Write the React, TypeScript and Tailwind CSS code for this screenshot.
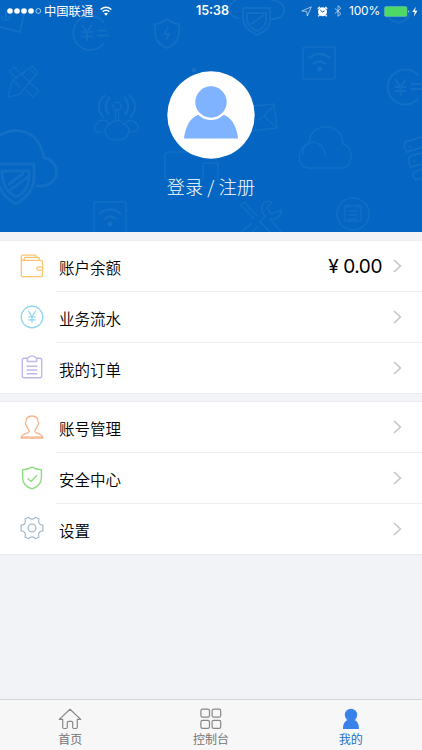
import type { ReactNode } from "react";

interface MenuItem {
    label: string;
    icon: ReactNode;
    value?: string;
}

function WalletIcon() {
    return (
        <svg className="h-6 w-6" viewBox="0 0 24 24" fill="none" stroke="#fdc470" strokeWidth="1.3" strokeLinejoin="round">
            <path d="M22.6 12V8.4a2 2 0 0 0-2-2H3.2A1.9 1.9 0 0 1 1.3 4.5V20.7a2 2 0 0 0 2 2H20.6a2 2 0 0 0 2-2V16.7" />
            <path d="M1.3 4.5V2.9a1.7 1.7 0 0 1 1.7-1.7H14.5a1.7 1.7 0 0 1 1.7 1.7V3.3" />
            <path d="M4.3 6.3V4.9a1.6 1.6 0 0 1 1.6-1.6H17.6a1.6 1.6 0 0 1 1.6 1.6V6.3" />
            <path d="M22.7 12.8H18.2a1.3 1.3 0 0 0-1.3 1.3v.7a1.3 1.3 0 0 0 1.3 1.3H22.7Z" />
        </svg>
    );
}

function YenIcon() {
    return (
        <svg className="h-6 w-6" viewBox="0 0 24 24" fill="none" stroke="#8ad4ec" strokeWidth="1.2">
            <circle cx="12" cy="12" r="10.8" />
            <path d="M8.2 5.8 12 11.7 15.8 5.8M12 11.7V17.8M8.2 12H15.8M8.2 14.8H15.8" />
        </svg>
    );
}

function ClipboardIcon() {
    return (
        <svg className="h-6 w-6" viewBox="0 0 24 24" fill="none" stroke="#bfb6ea" strokeWidth="1.4" strokeLinejoin="round">
            <path d="M7.3 3.2H4.2a1.9 1.9 0 0 0-1.9 1.9V20.8a1.9 1.9 0 0 0 1.9 1.9H19.8a1.9 1.9 0 0 0 1.9-1.9V5.1a1.9 1.9 0 0 0-1.9-1.9H16.7" />
            <path d="M7.3 6.5V3.3L9.2 2.2C10.2.4 13.8.4 14.8 2.2L16.7 3.3V6.5Z" />
            <path d="M6.7 11.3H17.3M6.7 15H17.3M6.7 18.7H17.3" />
        </svg>
    );
}

function UserIcon() {
    return (
        <svg className="h-6 w-6" viewBox="0 0 24 24" fill="none" stroke="#f8b389" strokeWidth="1.3" strokeLinejoin="round">
            <path d="M12 1C7.8 1 5.6 3.7 5.9 7.2C5.1 7.5 5.4 9.6 6.3 10.2C6.8 12.6 7.6 13.7 8.7 14.7C9.6 16.4 8.9 17.4 7 18.2C3.5 19.2 1.4 20 1.1 23H22.9C22.6 20 20.5 19.2 17 18.2C15.1 17.4 14.4 16.4 15.3 14.7C16.4 13.7 17.2 12.6 17.7 10.2C18.6 9.6 18.9 7.5 18.1 7.2C18.4 3.7 16.2 1 12 1Z" />
            <path d="M1.7 21.8H22.3" strokeWidth=".8" />
        </svg>
    );
}

function ShieldIcon() {
    return (
        <svg className="h-6 w-6" viewBox="0 0 24 24" fill="none" stroke="#90dc82" strokeWidth="1.4" strokeLinejoin="round">
            <path d="M12 1.1C9 3 6.2 3.7 2.6 3.8V12C2.6 17.3 6.5 21 12 22.9C17.5 21 21.4 17.3 21.4 12V3.8C17.8 3.7 15 3 12 1.1Z" />
            <path d="M7.5 12.3 11 15.6 17 9.3" />
        </svg>
    );
}

function GearIcon() {
    return (
        <svg className="h-6 w-6" viewBox="0 0 24 24" fill="none" stroke="#a9bccb" strokeWidth="1.3" strokeLinejoin="round">
            <path d="M8.4 1.2C9.5 2.7 10.5 3.2 12 3.2S14.500 2.700 15.600 1.200L18.900 3C18.300 4.900 18.300 6 19 7.300S20.700 8.900 22.900 9.100V14.900C20.700 15.100 19.700 15.500 19 16.700S18.300 19.100 18.900 21L15.600 22.800C14.500 21.300 13.500 20.800 12 20.800S9.500 21.300 8.400 22.800L5.100 21C5.700 19.100 5.700 18 5 16.700S3.300 15.100 1.100 14.900V9.100C3.300 8.900 4.300 8.500 5 7.300S5.700 4.900 5.100 3Z" />
            <circle cx="12" cy="12" r="3.9" />
        </svg>
    );
}

const accountItems: MenuItem[] = [
    { label: "账户余额", icon: <WalletIcon />, value: "¥ 0.00" },
    { label: "业务流水", icon: <YenIcon /> },
    { label: "我的订单", icon: <ClipboardIcon /> },
];

const settingItems: MenuItem[] = [
    { label: "账号管理", icon: <UserIcon /> },
    { label: "安全中心", icon: <ShieldIcon /> },
    { label: "设置", icon: <GearIcon /> },
];

// faint line icons scattered behind the profile header
function HeaderPattern() {
    return (
        <svg
            className="absolute inset-0 h-full w-full"
            viewBox="0 0 422 232"
            fill="none"
            stroke="#fff"
            strokeOpacity=".06"
            strokeWidth="1.5"
            strokeLinejoin="round"
        >
            <path d="M0 27 20 32 25 10M2 16a3.5 3.5 0 1 0 8 0M6 18V12" strokeWidth="2" />
            <path d="M104 23A17 17 0 1 0 104 43M82 25 87 32 92 25M87 32V41M81 32H93M81 36.5H93M97 30.5H107M97 35.5H109" strokeWidth="2" />
            <path d="M418 75A17.5 17.5 0 1 0 418 99M395 79 400.5 87 406 79M400.5 87V96M394.5 87H406.5M394.5 91H406.5M411 84H422M411 89H422" strokeWidth="2" />
            <path d="M386 10C388 26 408 27 411 10M400 5V16" strokeWidth="2" />
            <path d="M167 19C163 22 159 24 155 24C154 36 156 44 167 48C178 44 180 36 179 24C175 24 171 22 167 19Z" strokeWidth="2" />
            <path d="M168.5 27 164 34H169L166 40" strokeWidth="1.8" />
            <path d="M9 91 13 80 32 66 38 72 20 94 9 97ZM13 80 20 87M30 69 36 75M9 71 14 67 39 91 33 97 26 91M9 71 17 79M22 75 25 72M29 82 32 79" strokeWidth="1.3" />
            <path d="M105 95Q93 106 104 118M110 97Q102 106 109 115M124 97Q132 106 125 115M129 95Q141 106 130 118" strokeWidth="2" />
            <circle cx="117" cy="106" r="4" />
            <path d="M115.5 110V121M118.5 110V121M107 136C102 129 108 124 111 124C113 119 121 119 123 124C127 124 132 130 126 137C124 141 109 141 107 136ZM110 124C106 119 98 119 97 124C92 126 94 134 103 132M124 124C128 119 135 120 136 124C141 126 138 133 129 132" />
            <path d="M0 135C18 125 40 132 44 158C60 160 62 184 42 186H36M0 164H34V178C34 190 26 198 16 204C7 199 1 193 0 186M2 171H29C30 186 25 193 16 197C6 192 2 184 2 171ZM8 185 24 173M10 190 28 177" strokeWidth="3" />
            <path d="M239 18C228 18 226 5 236 0M272 0C288 1 288 18 274 19H270M243 8H270V20C270 27 264 32 257 35C249 31 244 27 243 20ZM247 13H266V20C266 26 262 29 257 31C251 28 247 25 247 20ZM251 24 264 15" strokeWidth="2" />
            <rect x="303" y="47" width="32" height="32" rx="2" />
            <path d="M309 58Q319 50 330 58M313 64Q319 59 326 64" strokeWidth="2.4" />
            <circle cx="319.5" cy="69" r="2.5" fill="#fff" fillOpacity=".07" stroke="none" />
            <path d="M94 232V204a2 2 0 0 1 2-2H124a2 2 0 0 1 2 2V232" />
            <path d="M99 214Q110 205 121 214M104 219Q110 214 116 219" strokeWidth="2.4" />
            <circle cx="110" cy="224" r="2.5" fill="#fff" fillOpacity=".07" stroke="none" />
            <path d="M251 106 274 104 277 128 252 131M258 121 274 106M264 116 276 127" />
            <circle cx="194" cy="70" r="2.5" fill="#fff" fillOpacity=".07" stroke="none" />
            <path d="M309 168C296 168 296 146 309 144C309 121 342 121 343 144C354 146 354 168 342 168ZM303 155C301 138 325 138 325 156" />
            <path d="M422 137 405 142Q403 148 407 152L422 147M410 156 422 153M410 156Q407 162 411 167L422 164M414 172 422 169M414 172Q411 176 416 180L422 178M409 147H411M413 161H415" strokeWidth="2" />
            <path d="M181 180H168a3 3 0 0 1-3-3V155a3 3 0 0 1 3-3H213a3 3 0 0 1 3 3V161M203 180V163H218V181" />
            <circle cx="353" cy="214" r="16" />
            <path d="M345 206H361V221H345ZM348 211H358M348 215H358M348 219H358M348 204V208M358 204V208" />
            <path d="M240 205 245 202 249 208 258 216M240 205 245 209 254 219M272 202C262 198 259 209 265 216L260 222 270 232M272 202 267 208 271 214 282 210C280 218 276 220 270 219L281 232M252 223 241 232M259 226 252 232" />
        </svg>
    );
}

function StatusBar() {
    return (
        <div className="relative grid h-[22px] grid-cols-[1fr_auto_1fr] items-center pr-1 pl-[7px] text-white">
            <div className="flex items-center">
                <svg className="h-2 w-[35px]" viewBox="0 0 35 8">
                    <circle cx="3" cy="4" r="2.8" fill="white" />
                    <circle cx="10" cy="4" r="2.8" fill="white" />
                    <circle cx="17" cy="4" r="2.8" fill="white" />
                    <circle cx="24" cy="4" r="2.8" fill="white" />
                    <circle cx="31.3" cy="4" r="2.4" fill="none" stroke="white" strokeWidth=".6" />
                </svg>
                <span className="ml-[2px] text-[12.3px] leading-none">中国联通</span>
                <svg className="ml-[7px] h-[10px] w-3" viewBox="0 0 12 10" fill="none" stroke="white" strokeWidth="1.5">
                    <path d="M.6 3.5Q6-1 11.4 3.5M2.6 5.7Q6 2.9 9.4 5.7" />
                    <path d="M4 7.5Q6 5.9 8 7.5L6 9.7Z" fill="white" stroke="none" />
                </svg>
            </div>
            <span className="font-[Inter] text-[12.5px] leading-none font-semibold">15:38</span>
            <div className="flex items-center justify-end">
                <svg className="h-[11px] w-[11px]" viewBox="0 0 11 11" fill="none" stroke="white" strokeOpacity=".65" strokeWidth=".9">
                    <path d="M10.3.8 6.3 10.1 5.7 5.4.8 5Z" />
                </svg>
                <svg className="ml-[5px] h-[11px] w-[11px]" viewBox="0 0 11 11">
                    <circle cx="5.5" cy="5.7" r="4.5" fill="white" />
                    <path d="M.8 2.8 2.8.9M10.2 2.8 8.2.9M2.4 9 1.3 10.4M8.6 9 9.7 10.4" stroke="white" strokeWidth="1.3" />
                    <path d="M3.3 4 5.5 6 7.5 4.8" fill="none" stroke="#0465c1" strokeWidth="1" />
                </svg>
                <svg className="ml-[6px] h-3 w-2" viewBox="0 0 8 12" fill="none" stroke="white" strokeOpacity=".65" strokeWidth=".9">
                    <path d="M.7 3.3 7 8.7 4 11.3V.7L7 3.3.7 8.7" />
                </svg>
                <span className="ml-[7px] font-[Inter] text-[12px] leading-none tracking-[-0.2px]">100%</span>
                <svg className="ml-[4px] h-[11px] w-[34px]" viewBox="0 0 34 11">
                    <rect x=".5" y=".5" width="22.5" height="10" rx="1.5" fill="#4cd964" stroke="#78bdb2" strokeWidth=".5" />
                    <path d="M24 4Q25.5 5.5 24 7Z" fill="white" />
                    <path d="M31.8.8 28.3 6H30.7L29.8 10.5 33.5 4.8H31Z" fill="white" />
                </svg>
            </div>
        </div>
    );
}

function Avatar() {
    return (
        <svg className="h-[88px] w-[88px]" viewBox="0 0 88 88">
            <circle cx="44" cy="44" r="43.7" fill="white" />
            <path d="M17 67.5C18 57 23 45 34 43H54C65 45 70 57 71 67.5Z" fill="#7fb2ff" />
            <circle cx="44" cy="31" r="18" fill="white" />
            <circle cx="44" cy="31" r="15.7" fill="#7fb2ff" />
        </svg>
    );
}

function MenuGroup({ items }: { items: MenuItem[] }) {
    return (
        <div className="bg-white shadow-[0_0_0_1px_#ebecef]">
            {items.map((item, i) => (
                <div key={item.label} className="flex h-[51px] pl-5 last:h-[50px]">
                    <div className="flex w-9 items-center pb-[2px]">{item.icon}</div>
                    <div
                        className={`flex flex-1 items-center pr-5 pl-[3px] ${
                            i < items.length - 1 ? "border-b border-[#eeeeef]" : ""
                        }`}
                    >
                        <span className="flex-1 pt-1 text-[15.5px] leading-none font-[350] text-black">{item.label}</span>
                        {item.value && (
                            <span className="mr-[11px] pt-[1px] font-[Inter] text-[19px] leading-none tracking-[-0.4px] text-black">
                                {item.value}
                            </span>
                        )}
                        <svg className="mb-[1px] h-[14px] w-[9px]" viewBox="0 0 9 14" fill="none" stroke="#c5c5ca" strokeWidth="1.6">
                            <path d="M1 1 7.4 7 1 13" />
                        </svg>
                    </div>
                </div>
            ))}
        </div>
    );
}

function TabBar() {
    return (
        <nav className="grid h-[51px] grid-cols-3 border-t border-[#d3d6da] bg-[#f7f7f7] text-[12px] leading-none text-[#757575]">
            <div className="flex flex-col items-center pt-2">
                <svg className="h-[22px] w-6" viewBox="0 0 24 22" fill="none" stroke="#888" strokeWidth="1.2" strokeLinejoin="round">
                    <path d="M12 1.3 1.3 11.4H4.7V19.3Q4.7 20.5 5.9 20.5H8.2Q9.3 20.5 9.3 19.3V14.5Q9.3 13.3 10.5 13.3H13.5Q14.7 13.3 14.7 14.5V19.3Q14.7 20.5 15.8 20.5H18.1Q19.3 20.5 19.3 19.3V11.4H22.7Z" />
                </svg>
                <span className="mt-[3px]">首页</span>
            </div>
            <div className="flex flex-col items-center pt-2">
                <svg className="h-[22px] w-6" viewBox="0 0 24 22" fill="none" stroke="#888" strokeWidth="1.2">
                    <rect x="1.9" y="1.2" width="8.6" height="8" rx="1.7" />
                    <rect x="13.1" y="1.2" width="8.6" height="8" rx="1.7" />
                    <rect x="1.9" y="12.4" width="8.6" height="8" rx="1.7" />
                    <rect x="13.1" y="12.4" width="8.6" height="8" rx="1.7" />
                </svg>
                <span className="mt-[3px]">控制台</span>
            </div>
            <div className="flex flex-col items-center pt-2 pr-[2px] text-[#176fcd]">
                <svg className="h-[22px] w-6" viewBox="0 0 24 22" fill="#3982ea">
                    <circle cx="12" cy="7" r="6.2" />
                    <path d="M9 10H15V12C18 12.7 20 15.5 20 21H4C4 15.5 6 12.7 9 12Z" />
                </svg>
                <span className="mt-[3px]">我的</span>
            </div>
        </nav>
    );
}

export default function App() {
    return (
        <div className="flex h-[750px] w-[422px] flex-col overflow-hidden bg-[#f2f3f6] font-['Noto_Sans_CJK_SC',sans-serif]">
            <header className="relative h-[232px] overflow-hidden bg-[#0466c2]">
                <HeaderPattern />
                <StatusBar />
                <div className="relative flex flex-col items-center pt-[49px]">
                    <Avatar />
                    <span className="mt-[18px] text-[18px] leading-none font-light tracking-[0.2px] text-white">登录 / 注册</span>
                </div>
            </header>
            <main className="flex flex-1 flex-col gap-[9px] pt-[9px]">
                <MenuGroup items={accountItems} />
                <MenuGroup items={settingItems} />
            </main>
            <TabBar />
        </div>
    );
}
